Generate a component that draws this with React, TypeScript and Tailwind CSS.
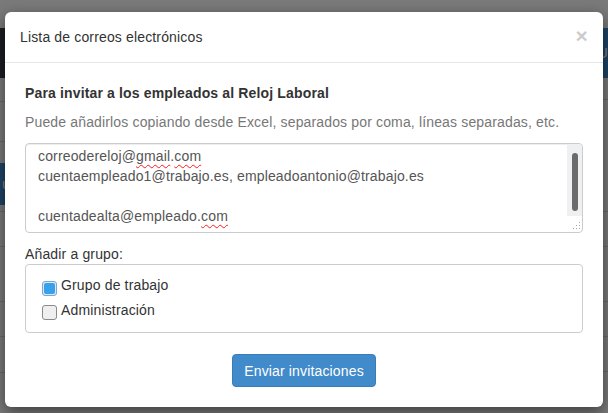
import React from "react";

const font = "font-['Liberation_Sans',Arial,sans-serif] tracking-[0.15px]";

function Squiggle({ children }: { children: React.ReactNode }) {
  return (
    <span className="underline decoration-wavy decoration-[#ff1a1a] decoration-1 underline-offset-[3px]">
      {children}
    </span>
  );
}

function Check({ checked, label }: { checked?: boolean; label: string }) {
  return (
    <label className="flex h-[20px] items-start">
      {checked ? (
        <span className="mt-[6px] flex h-[15px] w-[15px] items-center justify-center rounded-[3px] border border-[#7aa7d4] bg-[#d9e9f7]">
          <span className="h-[11px] w-[11px] rounded-[2px] bg-[#39a0e9]" />
        </span>
      ) : (
        <span className="mt-[5px] h-[15px] w-[15px] rounded-[3px] border border-[#8a8a8a] bg-[#efefef]" />
      )}
      <span className="ml-[4px] text-[14px] leading-[20px] text-[#333]">{label}</span>
    </label>
  );
}

export default function App() {
  return (
    <div className={`relative h-[413px] w-[608px] overflow-hidden bg-[#f4f4f4] ${font}`}>
      {/* page behind the dialog */}
      <div className="pt-[28px]">
        <div className="flex h-[50px] justify-end bg-[#343a44]">
          <div className="w-[40px] bg-[#3c88cc] pl-[29px] text-[15px] leading-[50px] text-white">U</div>
        </div>
        <div className="flex">
          <div className="w-[304px]">
            <div className="h-[24px] border-b border-[#d6d6d6]" />
            <div className="h-[40px] border-b border-[#d6d6d6]" />
            <div className="h-[21px]" />
            <div className="h-[42px] bg-[#3c88cc] pl-[2px] text-[15px] leading-[42px] text-white">u</div>
            <div className="h-[7px] border-b border-[#d6d6d6]" />
            <div className="h-[35px] border-b border-[#d6d6d6]" />
            <div className="h-[55px] border-b border-[#d6d6d6]" />
            <div className="h-[35px] border-b border-[#d6d6d6]" />
            <div className="h-[36px] border-b border-[#d6d6d6]" />
          </div>
          <div className="flex-1">
            <div className="h-[22px] border-b border-[#d6d6d6]" />
            <div className="h-[112px] border-b border-[#d6d6d6]" />
            <div className="h-[35px] border-b border-[#d6d6d6]" />
            <div className="h-[55px] border-b border-[#d6d6d6]" />
            <div className="h-[35px] border-b border-[#d6d6d6]" />
            <div className="h-[35px] border-b border-[#d6d6d6]" />
          </div>
        </div>
      </div>

      {/* backdrop */}
      <div className="absolute inset-0 bg-black/50" />

      {/* dialog */}
      <div className="absolute left-[5px] top-[12px] w-[598px] rounded-[6px] bg-white shadow-[0_5px_15px_rgba(0,0,0,0.5)]">
        <div className="flex items-center justify-between border-b border-[#e5e5e5] px-[15px] py-[15px]">
          <h4 className="text-[14px] leading-[20px] text-[#333]">Lista de correos electrónicos</h4>
          <button className="-mt-[2px] text-[21px] font-bold leading-[20px] text-black opacity-20">×</button>
        </div>

        <div className="px-[20px] pb-[20px] pt-[20px] text-[14px] leading-[20px]">
          <p className="font-bold text-[#333]">Para invitar a los empleados al Reloj Laboral</p>
          <p className="mt-[9px] text-[#777]">
            Puede añadirlos copiando desde Excel, separados por coma, líneas separadas, etc.
          </p>

          <div className="mt-[11px] flex h-[90px] overflow-hidden rounded-[4px] border border-[#ccc] shadow-[inset_0_1px_1px_rgba(0,0,0,0.075)]">
            <div className="flex-1 pl-[12px] pt-[2px] text-[#555]">
              <div>
                correodereloj@<Squiggle>gmail</Squiggle>.<Squiggle>com</Squiggle>
              </div>
              <div>cuentaempleado1@trabajo.es, empleadoantonio@trabajo.es</div>
              <div>&nbsp;</div>
              <div>
                cuentadealta@empleado.<Squiggle>com</Squiggle>
              </div>
            </div>
            <div className="flex w-[15px] flex-col">
              <div className="flex h-[72px] justify-center bg-[#eef0f1] pt-[9px]">
                <div className="h-[58px] w-[6px] rounded-full bg-[#6b6b6b]" />
              </div>
              <div className="flex flex-1 items-end justify-end pb-[2px] pr-[1px]">
                <svg width="9" height="9" viewBox="0 0 9 9">
                  <g fill="#a8a8a8">
                    <rect x="7" y="1" width="1" height="1" />
                    <rect x="4" y="4" width="1" height="1" />
                    <rect x="7" y="4" width="1" height="1" />
                    <rect x="1" y="7" width="1" height="1" />
                    <rect x="4" y="7" width="1" height="1" />
                    <rect x="7" y="7" width="1" height="1" />
                  </g>
                </svg>
              </div>
            </div>
          </div>

          <div className="mt-[11px] text-[#333]">Añadir a grupo:</div>
          <div className="flex flex-col gap-[5px] rounded-[4px] border border-[#ccc] pb-[12px] pl-[16px] pt-[10px]">
            <Check checked label="Grupo de trabajo" />
            <Check label="Administración" />
          </div>

          <div className="mt-[21px] flex justify-center">
            <button className="h-[33px] w-[144px] rounded-[4px] border border-[#357ebd] bg-[#428bca] text-[14px] text-white">
              Enviar invitaciones
            </button>
          </div>
        </div>
      </div>
    </div>
  );
}
